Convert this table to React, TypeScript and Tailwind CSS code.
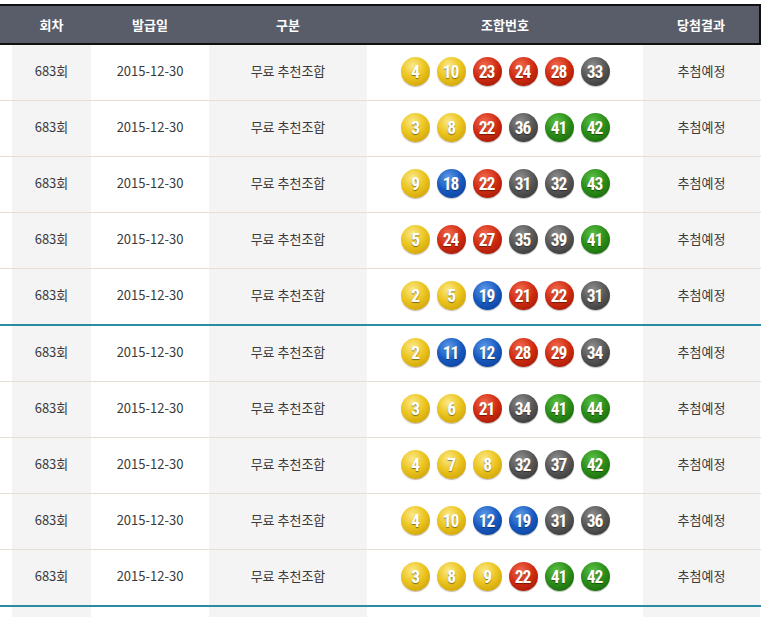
import React from 'react';

const rows: number[][] = [
  [4, 10, 23, 24, 28, 33],
  [3, 8, 22, 36, 41, 42],
  [9, 18, 22, 31, 32, 43],
  [5, 24, 27, 35, 39, 41],
  [2, 5, 19, 21, 22, 31],
  [2, 11, 12, 28, 29, 34],
  [3, 6, 21, 34, 41, 44],
  [4, 7, 8, 32, 37, 42],
  [4, 10, 12, 19, 31, 36],
  [3, 8, 9, 22, 41, 42],
];

const ballClass = (n: number) => {
  if (n <= 10) return 'bg-[radial-gradient(circle_at_40%_30%,#fbe98a_0%,#ecc51f_45%,#c39500_100%)]';
  if (n <= 20) return 'bg-[radial-gradient(circle_at_40%_30%,#5f9bea_0%,#1658bf_50%,#0a3a8c_100%)]';
  if (n <= 30) return 'bg-[radial-gradient(circle_at_40%_30%,#f26a4e_0%,#cf2a10_50%,#921404_100%)]';
  if (n <= 40) return 'bg-[radial-gradient(circle_at_40%_30%,#8e8e8e_0%,#555555_50%,#2e2e2e_100%)]';
  return 'bg-[radial-gradient(circle_at_40%_30%,#5cbf45_0%,#2a8c18_50%,#135c08_100%)]';
};

function Ball({ n }: { n: number }) {
  return (
    <div
      className={`w-[29px] h-[29px] rounded-full flex items-center justify-center text-white text-[19px] font-bold leading-none shadow-[0_1px_1px_rgba(0,0,0,0.25)] [text-shadow:0_1px_1px_rgba(0,0,0,0.45)] ${ballClass(n)}`}
      style={{ fontFamily: '"Liberation Sans Narrow", "Roboto Condensed", Roboto, sans-serif' }}
    >
      <span className="inline-block scale-x-[0.92] tracking-[-1px] -ml-px">{n}</span>
    </div>
  );
}

const cell = 'flex items-center justify-center';
const shade = 'bg-[#f4f4f4]';

function Row({ nums, border }: { nums: number[]; border: string }) {
  return (
    <div className={`flex h-[56px] ${border}`}>
      <div className="w-[12px]" />
      <div className={`w-[79px] ${cell} ${shade} pb-[3px]`}>683회</div>
      <div className={`w-[118px] ${cell} pb-[3px]`}>2015-12-30</div>
      <div className={`w-[158px] ${cell} ${shade} pb-[3px]`}>무료 추천조합</div>
      <div className={`w-[276px] ${cell} gap-[7px] pl-px pb-[2px]`}>
        {nums.map((n, i) => (
          <Ball key={i} n={n} />
        ))}
      </div>
      <div className={`w-[117px] ${cell} ${shade} pb-[3px]`}>추첨예정</div>
    </div>
  );
}

export default function App() {
  return (
    <div
      className="w-[763px] h-[617px] overflow-hidden bg-white pt-[4px] text-[13px] text-[#3a3a3a]"
      style={{ fontFamily: '"Noto Sans CJK KR", "Liberation Sans", sans-serif' }}
    >
      <div className="w-[761px]">
        <div className="flex h-[41px] bg-[#595d69] border-y-2 border-r-2 border-[#111] text-white font-bold text-[13px]">
          <div className="w-[12px]" />
          <div className={`w-[79px] ${cell}`}>회차</div>
          <div className={`w-[118px] ${cell}`}>발급일</div>
          <div className={`w-[158px] ${cell}`}>구분</div>
          <div className={`w-[276px] ${cell}`}>조합번호</div>
          <div className={`w-[116px] ${cell}`}>당첨결과</div>
        </div>
        {rows.map((nums, i) => (
          <Row
            key={i}
            nums={nums}
            border={
              i % 5 === 4
                ? 'border-b-2 border-[#2a8ba3] h-[57px]'
                : 'border-b border-[#e6ddd3]'
            }
          />
        ))}
        <div className="flex h-[20px]">
          <div className="w-[12px]" />
          <div className={`w-[79px] ${shade}`} />
          <div className="w-[118px]" />
          <div className={`w-[158px] ${shade}`} />
          <div className="w-[276px]" />
          <div className={`w-[117px] ${shade}`} />
        </div>
      </div>
    </div>
  );
}
